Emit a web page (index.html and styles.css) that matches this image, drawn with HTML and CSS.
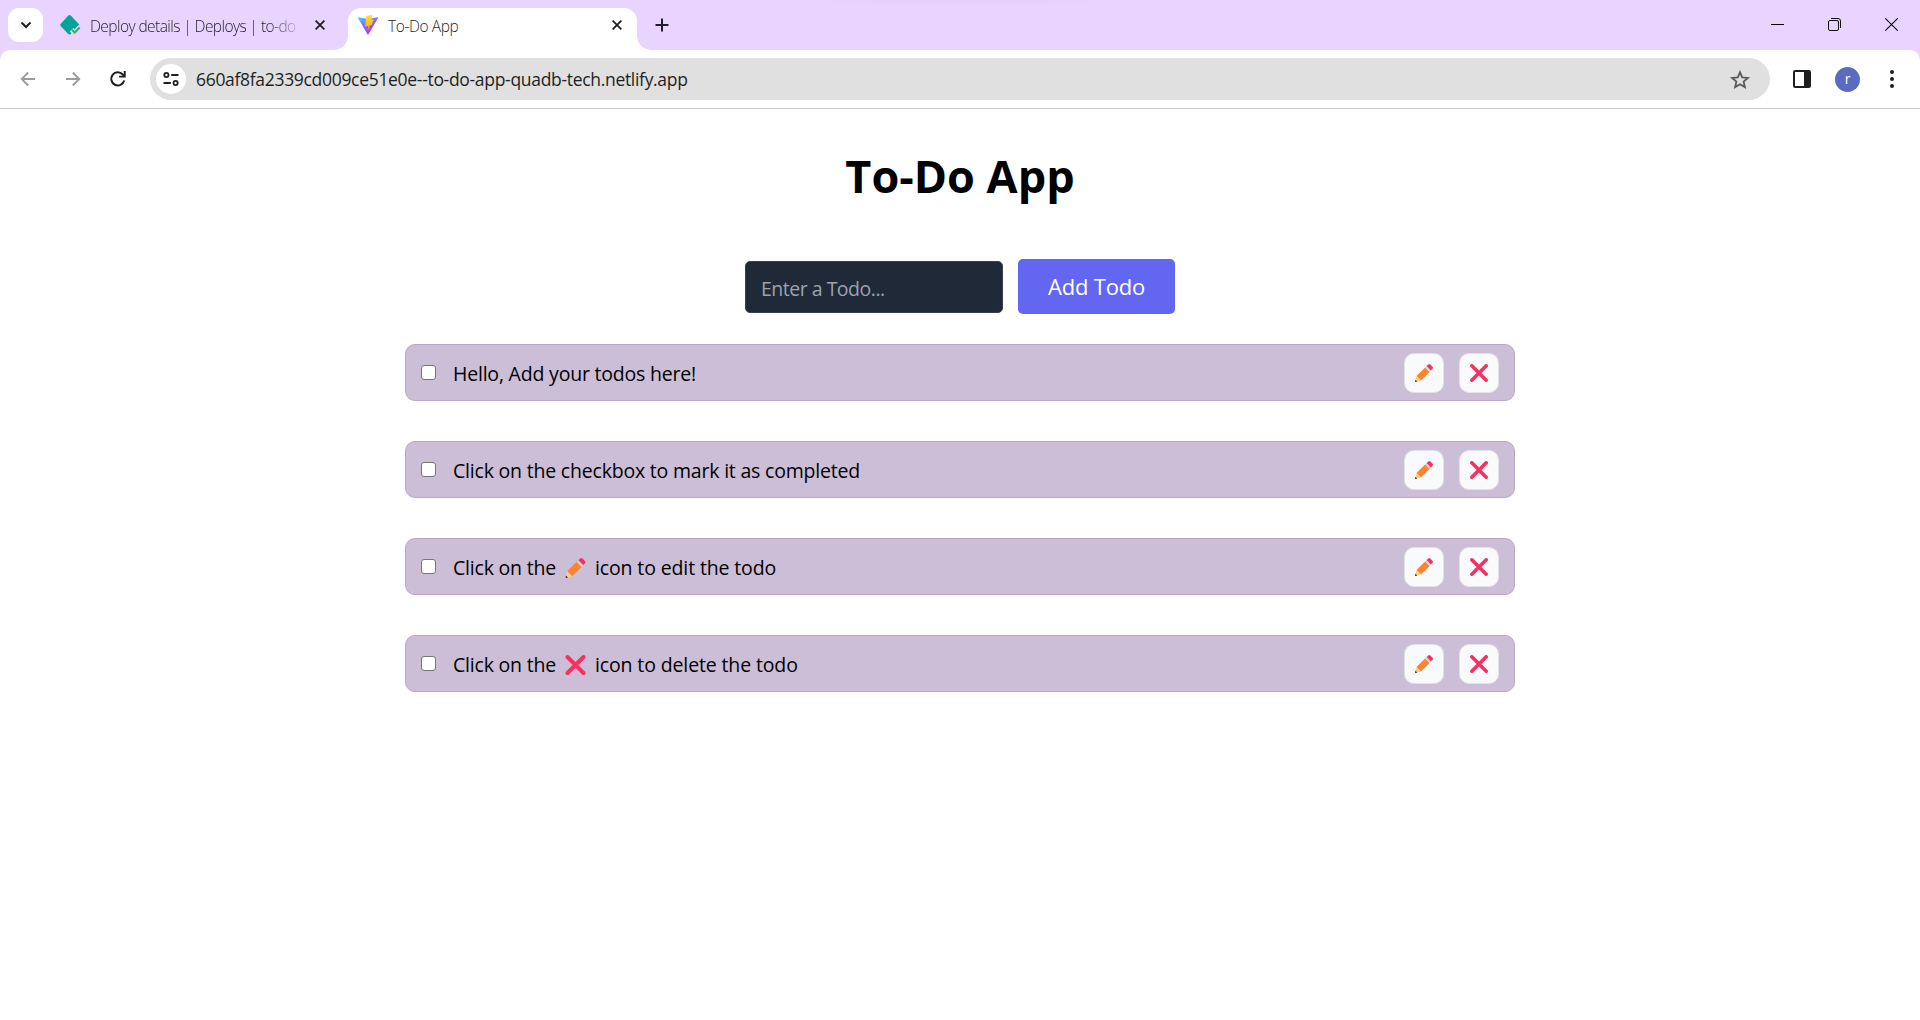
FILE: index.html
```html
<!DOCTYPE html>
<html lang="en">
<head>
<meta charset="utf-8">
<title>To-Do App</title>
<link rel="stylesheet" href="styles.css">
</head>
<body>
<svg class="defs" aria-hidden="true">
  <symbol id="pencil" viewBox="0 0 20 20">
    <path fill="#ff822d" d="M11.2 3.8l5 5L6.600 18.200 1.700 13.300z"/>
    <path fill="#d3d3d3" d="M12.800 2.200l5 5-1.700 1.700-5-5z"/>
    <path fill="#f92f60" d="M14.600.6q1.200-1.100 2.400 0l2.400 2.400q1.200 1.200 0 2.400l-1.700 1.700-4.800-4.800z"/>
    <path fill="#ffce7c" d="M1.700 13.300l4.900 4.900-6 1.700q-.6.100-.5-.5z"/>
    <path fill="#402a32" d="M.6 17.500l1.900 1.900-1.800.5q-.7.100-.6-.6z"/>
  </symbol>
  <symbol id="cross" viewBox="0 0 20 20">
    <path fill="none" stroke="#f92f60" stroke-width="3.900" stroke-linecap="round" d="M2 2l16 16M18 2L2 18"/>
  </symbol>
  <symbol id="close" viewBox="0 0 10 10">
    <path fill="none" stroke="#1f1f23" stroke-width="1.800" d="M.6.600l8.800 8.800M9.400.600L.6 9.400"/>
  </symbol>
</svg>

<header class="browser">
  <div class="tabstrip">
    <button class="tab-search" aria-label="Search tabs">
      <svg width="12" height="8" viewBox="0 0 12 8"><path d="M1.500 1.500L6 6l4.500-4.500" fill="none" stroke="#1f1f23" stroke-width="2"/></svg>
    </button>
    <div class="tab tab-idle">
      <svg class="favicon" width="20" height="20" viewBox="0 0 20 20">
        <path fill="#05a39b" d="M8.300.5q1.200-1 2.400 0l8.100 8.400q1 1.100 0 2.100l-8.100 7.900q-1.200 1-2.400 0L.6 11q-1-1.100 0-2.100z"/>
        <path fill="none" stroke="#e8d4ff" stroke-width="5" d="M11.500 14.800l3 2.900 6-6"/>
        <path fill="none" stroke="#37b34a" stroke-width="2" d="M12 14.800l2.700 2.700 5-5"/>
      </svg>
      <span class="tab-title">Deploy details | Deploys | to-do</span>
      <svg class="tab-close" width="10" height="10"><use href="#close"/></svg>
    </div>
    <div class="tab tab-active">
      <svg class="favicon" width="20" height="20" viewBox="0 0 20 20">
        <defs>
          <linearGradient id="vite" x1="0" y1="0" x2=".6" y2="1"><stop offset="0" stop-color="#41d1ff"/><stop offset=".55" stop-color="#8a5cff"/><stop offset="1" stop-color="#bd34fe"/></linearGradient>
          <linearGradient id="bolt" x1="0" y1="0" x2="0" y2="1"><stop offset="0" stop-color="#ffdd35"/><stop offset="1" stop-color="#ffa800"/></linearGradient>
        </defs>
        <path fill="url(#vite)" d="M.3 2.300L10 4l9.700-1.700q.6 0 .3.700L10.400 19.400q-.4.600-.8 0L0 3q-.2-.7.3-.7z"/>
        <path fill="url(#bolt)" d="M8.300.8L14.600 0l-1.200 4.800 2.300-.2-2 5.400-1.900.4-2.200 5.400.6-4.800-3.100.4z"/>
      </svg>
      <span class="tab-title">To-Do App</span>
      <svg class="tab-close" width="10" height="10"><use href="#close"/></svg>
    </div>
    <svg class="new-tab" width="14" height="14" viewBox="0 0 14 14"><path d="M7 .5v13M.5 7h13" stroke="#1f1f23" stroke-width="2"/></svg>
    <div class="window-controls">
      <svg width="13" height="13" viewBox="0 0 13 13"><path d="M0 6.500h13" stroke="#000"/></svg>
      <svg width="13" height="13" viewBox="0 0 13 13" fill="none" stroke="#111"><rect x=".5" y="2.500" width="10" height="10" rx="1.500"/><path d="M3 .5h7q2.500 0 2.500 2.500v7"/></svg>
      <svg width="13" height="13" viewBox="0 0 13 13"><path d="M.3.300l12.400 12.400M12.700.300L.3 12.700" stroke="#000" stroke-width="1.100"/></svg>
    </div>
  </div>
  <div class="toolbar">
    <div class="nav">
      <svg width="16" height="16" viewBox="0 0 16 16" fill="none" stroke="#9b9b9b" stroke-width="1.800"><path d="M15 8H2M8.200 1.500L1.700 8l6.500 6.500"/></svg>
      <svg width="16" height="16" viewBox="0 0 16 16" fill="none" stroke="#9b9b9b" stroke-width="1.800"><path d="M1 8h13M7.800 1.500L14.300 8l-6.500 6.500"/></svg>
      <svg width="16" height="16" viewBox="0 0 16 16"><path d="M14.200 9.500A6.600 6.600 0 1 1 12.800 3.500L14.500 5.200" fill="none" stroke="#1f1f23" stroke-width="2"/><path d="M15.700 0v6.600H9.100V4.700h4.700V0z" fill="#1f1f23"/></svg>
    </div>
    <div class="omnibox">
      <span class="site-info">
        <svg width="16" height="14" viewBox="0 0 16 14" fill="none" stroke="#1f1f23" stroke-width="1.800"><circle cx="3.400" cy="3" r="2.100"/><path d="M8.200 3H15.500M.5 11h7.300"/><circle cx="12.600" cy="11" r="2.100"/></svg>
      </span>
      <span class="url">660af8fa2339cd009ce51e0e--to-do-app-quadb-tech.netlify.app</span>
      <svg class="star" width="20" height="19" viewBox="0 0 20 19"><path d="M10 2.200l2.200 5.200 5.700.5-4.300 3.700 1.300 5.500-4.900-2.900-4.900 2.900 1.300-5.500L2.100 7.900l5.700-.5z" fill="none" stroke="#58595c" stroke-width="1.800"/></svg>
    </div>
    <svg class="side-panel" width="18" height="18" viewBox="0 0 18 18"><rect x="1" y="1" width="16" height="16" rx="1.200" fill="#fff" stroke="#1f1f23" stroke-width="2"/><path d="M11 1h6v16h-6z" fill="#1f1f23"/></svg>
    <span class="avatar">r</span>
    <svg class="menu" width="4" height="18" viewBox="0 0 4 18" fill="#1f1f23"><circle cx="2" cy="2" r="2"/><circle cx="2" cy="9" r="2"/><circle cx="2" cy="16" r="2"/></svg>
  </div>
</header>

<main class="app">
  <h1 class="heading">To-Do App</h1>
  <form class="todo-form">
    <input class="todo-input" type="text" placeholder="Enter a Todo...">
    <button class="add-button" type="button">Add Todo</button>
  </form>
  <ul class="todo-list">
    <li class="todo">
      <input class="check" type="checkbox">
      <span class="todo-text">Hello, Add your todos here!</span>
      <button class="action"><svg width="18" height="18"><use href="#pencil"/></svg></button>
      <button class="action"><svg width="18" height="18"><use href="#cross"/></svg></button>
    </li>
    <li class="todo">
      <input class="check" type="checkbox">
      <span class="todo-text">Click on the checkbox to mark it as completed</span>
      <button class="action"><svg width="18" height="18"><use href="#pencil"/></svg></button>
      <button class="action"><svg width="18" height="18"><use href="#cross"/></svg></button>
    </li>
    <li class="todo">
      <input class="check" type="checkbox">
      <span class="todo-text"><span class="lead">Click on the</span><svg class="emoji" width="21" height="20"><use href="#pencil"/></svg><span class="tail">icon to edit the todo</span></span>
      <button class="action"><svg width="18" height="18"><use href="#pencil"/></svg></button>
      <button class="action"><svg width="18" height="18"><use href="#cross"/></svg></button>
    </li>
    <li class="todo">
      <input class="check" type="checkbox">
      <span class="todo-text"><span class="lead">Click on the</span><svg class="emoji" width="21" height="20"><use href="#cross"/></svg><span class="tail">icon to delete the todo</span></span>
      <button class="action"><svg width="18" height="18"><use href="#pencil"/></svg></button>
      <button class="action"><svg width="18" height="18"><use href="#cross"/></svg></button>
    </li>
  </ul>
</main>
</body>
</html>
```
FILE: styles.css
```css
* { box-sizing: border-box; }
body {
  margin: 0;
  min-height: 1020px;
  background: #fff;
  color: #000;
  font-family: "Open Sans", "Noto Sans", sans-serif;
}
button, input { font: inherit; border: 0; padding: 0; margin: 0; }
svg { display: block; flex: none; overflow: visible; }
.defs { display: none; }

/* Browser chrome */
.browser { height: 109px; background: #e8d4ff; border-bottom: 1px solid #c9c9c9; }
.tabstrip {
  display: flex;
  height: 50px;
  padding: 8px 22px 0 8px;
  background: radial-gradient(ellipse 150px 7px at 960px 0, #e3cef9, #e8d4ff);
}
.tab-search {
  display: flex;
  align-items: center;
  justify-content: center;
  width: 35px;
  height: 34px;
  border-radius: 11px;
  background: #fff;
}
.tab { display: flex; align-items: center; position: relative; height: 42px; padding-bottom: 8px; color: #1f1f23; }
.tab-idle { width: 305px; padding-left: 17px; padding-right: 23px; }
.tab-active { width: 289px; padding-left: 10px; padding-right: 15px; border-radius: 13px 13px 0 0; background: #fff; }
.tab-active::before, .tab-active::after {
  content: "";
  position: absolute;
  bottom: 0;
  width: 14px;
  height: 14px;
}
.tab-active::before { left: -14px; background: radial-gradient(circle at 0 0, transparent 13.500px, #fff 14px); }
.tab-active::after { right: -14px; background: radial-gradient(circle at 100% 0, transparent 13.500px, #fff 14px); }
.tab-title {
  flex: 1;
  margin-left: 10px;
  white-space: nowrap;
  font-size: 15.500px;
  font-weight: 350;
  line-height: 24px;
  letter-spacing: -.4px;
  padding-top: 1px;
}
.tab-idle .tab-title { letter-spacing: -.57px; margin-right: 16px; -webkit-mask-image: linear-gradient(to right, #000 178px, transparent 214px); }
.new-tab { margin: 10px 0 0 18px; }
.window-controls { display: flex; gap: 44px; margin: 10px 0 0 auto; }

.toolbar { display: flex; align-items: center; height: 58px; padding-right: 26px; border-radius: 10px 10px 0 0; background: #fff; }
.nav { display: flex; gap: 29px; width: 150px; padding-left: 20px; }
.omnibox { display: flex; align-items: center; width: 1620px; height: 42px; padding: 0 20px 0 6px; border-radius: 21px; background: #e0e0e0; }
.site-info { display: flex; align-items: center; justify-content: center; width: 30px; height: 30px; border-radius: 50%; background: #fff; }
.url { flex: 1; margin-left: 10px; font-size: 17.500px; line-height: 26px; color: #1f1f23; letter-spacing: -.31px; }
.side-panel { margin-left: 23px; }
.avatar { width: 25px; height: 25px; margin-left: 24px; border-radius: 50%; background: #5c6bc0; color: #fff; font-size: 14px; line-height: 23px; text-align: center; }
.menu { margin-left: auto; }

/* App */
.app { display: flex; flex-direction: column; align-items: center; padding-top: 35px; }
.heading { margin: 0; font-size: 45px; line-height: 64px; font-weight: 700; }
.todo-form { display: flex; align-items: center; gap: 15px; margin-top: 51px; }
.todo-input { width: 258px; height: 52px; margin-top: 1px; padding: 2px 15px 0 15px; border: 1px solid #374151; border-radius: 5px; background: #1f2937; font-size: 19.500px; letter-spacing: -.5px; }
.todo-input::placeholder { color: #9ca3af; }
.add-button { width: 157px; height: 55px; padding-bottom: 1px; border-radius: 5px; background: #6366f1; color: #fff; font-size: 22px; letter-spacing: -.2px; }
.todo-list { display: flex; flex-direction: column; gap: 40px; width: 1110px; margin: 30px 0 0; padding: 0; list-style: none; }
.todo { display: flex; align-items: center; height: 57px; padding: 0 15px; border: 1px solid #b8a8c4; border-radius: 10px; background: #ccbed7; }
.check { appearance: none; width: 15px; height: 15px; border: 1px solid #767676; border-radius: 3px; background: #fff; }
.todo-text { display: flex; align-items: center; flex: 1; margin-left: 17px; font-size: 19.500px; line-height: 30px; letter-spacing: -.2px; padding-top: 2px; }
.lead { width: 112px; }
.tail { letter-spacing: -.13px; }
.emoji { width: 21px; margin-right: 9px; }
.action { display: flex; align-items: center; justify-content: center; width: 40px; height: 40px; margin-left: 15px; border: 1px solid #e2e2e8; border-radius: 10px; background: #f9fafb; }
```
